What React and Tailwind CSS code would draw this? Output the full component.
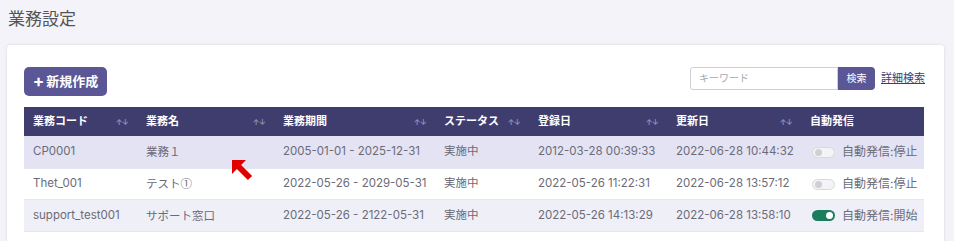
import React from "react";

const cols = [
  { key: "code", label: "業務コード", w: "w-[113px]", sort: true },
  { key: "name", label: "業務名", w: "w-[137px]", sort: true },
  { key: "period", label: "業務期間", w: "w-[161px]", sort: true },
  { key: "status", label: "ステータス", w: "w-[94px]", sort: true },
  { key: "created", label: "登録日", w: "w-[138px]", sort: true },
  { key: "updated", label: "更新日", w: "w-[134px]", sort: true },
  { key: "auto", label: "自動発信", w: "w-[123px]", sort: false },
];

const rows = [
  {
    code: "CP0001",
    name: "業務１",
    period: "2005-01-01 - 2025-12-31",
    status: "実施中",
    created: "2012-03-28 00:39:33",
    updated: "2022-06-28 10:44:32",
    on: false,
    bg: "bg-[#e3e3f4]",
    h: "h-[33px]",
  },
  {
    code: "Thet_001",
    name: "テスト①",
    period: "2022-05-26 - 2029-05-31",
    status: "実施中",
    created: "2022-05-26 11:22:31",
    updated: "2022-06-28 13:57:12",
    on: false,
    bg: "bg-white",
    h: "h-[31px]",
  },
  {
    code: "support_test001",
    name: "サポート窓口",
    period: "2022-05-26 - 2122-05-31",
    status: "実施中",
    created: "2022-05-26 14:13:29",
    updated: "2022-06-28 13:58:10",
    on: true,
    bg: "bg-[#efeff8]",
    h: "h-[32px]",
  },
];

const SortIcon = () => (
  <span className="text-[8px] leading-none text-[#8e8cb4] tracking-[-1px]">↑↓</span>
);

const Toggle = ({ on }) =>
  on ? (
    <span className="flex h-[11px] w-[23px] items-center justify-end rounded-full bg-[#1b7d5c] pr-[2px]">
      <span className="h-[7px] w-[7px] rounded-full bg-white" />
    </span>
  ) : (
    <span className="flex h-[11px] w-[23px] items-center rounded-full border border-[#d8d8de] bg-[#f4f4f6] pl-[2px]">
      <span className="h-[7px] w-[7px] rounded-full bg-[#cfcfd6]" />
    </span>
  );

export default function App() {
  return (
    <div
      className="relative h-[241px] w-[954px] overflow-hidden bg-[#f3f3f9]"
      style={{ fontFamily: '"Inter", "Noto Sans CJK JP", sans-serif' }}
    >
      <h1 className="pl-[8px] pt-[7px] text-[17px] leading-[24px] text-[#555]">業務設定</h1>

      <div className="ml-[7px] mt-[14px] h-[220px] w-[937px] rounded-[3px] bg-white pl-[17px] pr-[19px] pt-[22px] shadow-[0_0_3px_rgba(0,0,0,0.12)]">
        <div className="flex items-start justify-between">
          <button className="flex h-[29px] w-[83px] items-center justify-center gap-[2px] rounded-[5px] bg-[#5b5797] text-[13px] font-bold text-white">
            <span className="text-[17px] leading-none">+</span>
            <span>新規作成</span>
          </button>
          <div className="flex items-center">
            <div className="flex h-[23px] w-[148px] items-center rounded-l-[3px] border border-[#cfcfd8] pl-[8px] text-[10px] text-[#a9a9b3]">
              キーワード
            </div>
            <button className="flex h-[23px] w-[37px] items-center justify-center rounded-r-[4px] bg-[#5b5797] text-[10px] text-white">
              検索
            </button>
            <a className="ml-[6px] text-[11px] text-[#3f3d6e] underline">詳細検索</a>
          </div>
        </div>

        <div className="mt-[11px] w-[900px]">
          <div className="flex h-[29px] bg-[#3f3d6e] text-[11px] font-bold text-white">
            {cols.map((c) => (
              <div key={c.key} className={`${c.w} flex items-center justify-between pl-[9px] pr-[9px]`}>
                <span>{c.label}</span>
                {c.sort && <SortIcon />}
              </div>
            ))}
          </div>
          {rows.map((r) => (
            <div
              key={r.code}
              className={`flex ${r.h} border-b border-[#e6e6ee] text-[11.5px] text-[#6b6b78] ${r.bg}`}
            >
              <div className="flex w-[113px] items-center pl-[9px]">{r.code}</div>
              <div className="flex w-[137px] items-center pl-[9px] font-['Noto_Sans_CJK_JP']">{r.name}</div>
              <div className="flex w-[161px] items-center pl-[9px]">{r.period}</div>
              <div className="flex w-[94px] items-center pl-[9px]">{r.status}</div>
              <div className="flex w-[138px] items-center pl-[9px]">{r.created}</div>
              <div className="flex w-[134px] items-center pl-[9px]">{r.updated}</div>
              <div className="flex w-[123px] items-center gap-[7px] pl-[11px] text-[12px]">
                <Toggle on={r.on} />
                <span>{r.on ? "自動発信:開始" : "自動発信:停止"}</span>
              </div>
            </div>
          ))}
        </div>
      </div>

      <svg
        className="absolute left-[230px] top-[158px]"
        width="24"
        height="24"
        viewBox="0 0 24 24"
      >
        <path d="M2 2 L16 2 L11.1 6.9 L22.1 17.9 L17.9 22.1 L6.9 11.1 L2 16 Z" fill="#e00000" />
      </svg>
    </div>
  );
}
